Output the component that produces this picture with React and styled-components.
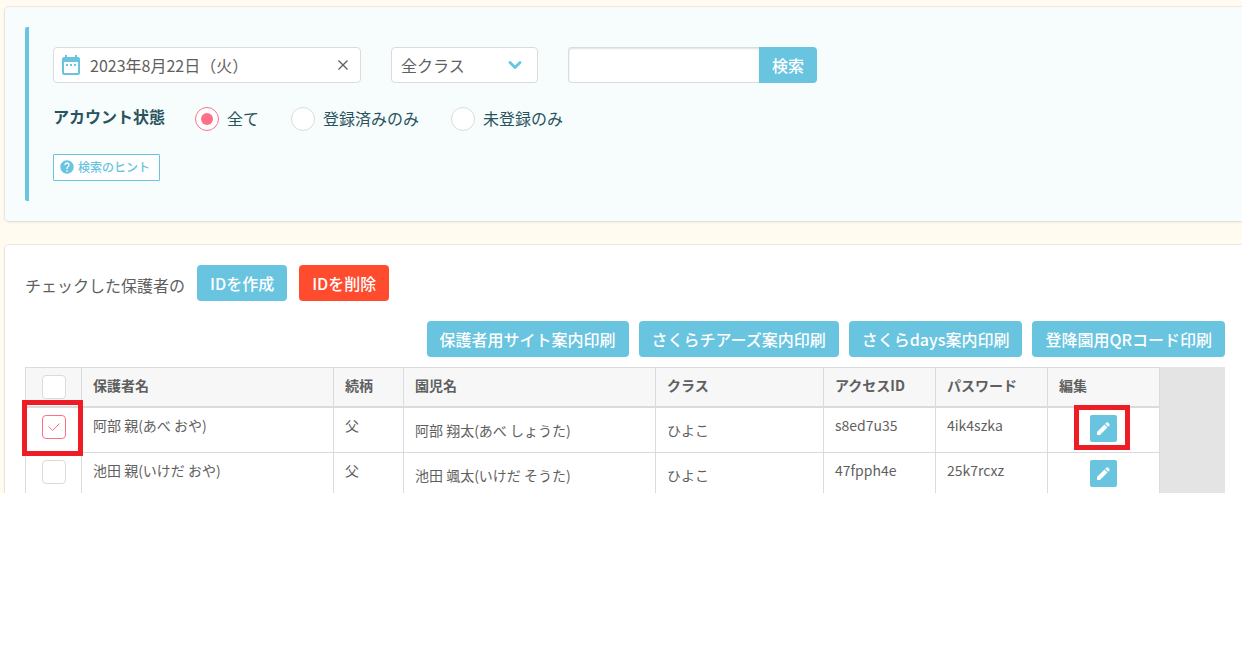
import React from "react";
import styled, { createGlobalStyle, css } from "styled-components";
import { MdDateRange, MdHelp } from "react-icons/md";

const colors = {
  blue: "#68c4df",
  red: "#ff4b2e",
  pink: "#ff7088",
  text: "#5f5f5f",
  teal: "#29535e",
  line: "#dbdbdb",
  mark: "#ee1c25",
};

const GlobalStyle = createGlobalStyle`
  *, *::before, *::after { box-sizing: border-box; }
  body {
    margin: 0;
    background: #fff;
    color: ${colors.text};
    font-family: "Noto Sans CJK JP", sans-serif;
    font-size: 16px;
    line-height: 24px;
  }
  button, input, select { font: inherit; color: inherit; margin: 0; }
`;

const Page = styled.main`
  display: flex;
  flex-direction: column;
  gap: 24px;
  padding: 7px 0 0 5px;
  background: #fffbf0;
`;

const Card = styled.section`
  padding: 20px 0 20px 20px;
  border-radius: 4px 0 0 4px;
  box-shadow: 0 0 1px 1px rgba(0, 0, 0, 0.07), 0 1px 3px rgba(0, 0, 0, 0.08);
`;

const SearchCard = styled(Card)`
  background: #f7fdfd;
`;

const ListCard = styled(Card)`
  padding: 20px 17px 0 20px;
  border-radius: 4px 0 0 0;
  background: #fff;
  clip-path: inset(-4px -4px 0 -4px);
`;

const SearchForm = styled.form`
  display: flex;
  flex-direction: column;
  align-items: flex-start;
  padding: 20px 24px;
  border-left: 4px solid ${colors.blue};
  border-radius: 2px 0 0 2px;
`;

const FieldRow = styled.div`
  display: flex;
  gap: 30px;
`;

const fieldBox = css`
  height: 36px;
  border: 1px solid ${colors.line};
  border-radius: 4px;
  background: #fff;
`;

const DateField = styled.div`
  ${fieldBox}
  display: flex;
  align-items: center;
  gap: 7px;
  width: 308px;
  padding: 0 10px 0 5px;
  color: ${colors.blue};
`;

const DateInput = styled.input`
  flex: 1;
  min-width: 0;
  padding: 0;
  border: 0;
  background: transparent;
  color: ${colors.text};
`;

const ClearButton = styled.button`
  display: flex;
  padding: 0;
  border: 0;
  background: transparent;
  color: ${colors.text};
`;

const SelectField = styled.div`
  display: grid;
  align-items: center;
  width: 147px;
  & > * { grid-area: 1 / 1; }
  & > svg { justify-self: end; margin-right: 16px; pointer-events: none; }
`;

const Select = styled.select`
  ${fieldBox}
  width: 100%;
  padding: 0 9px;
  appearance: none;
`;

const SearchGroup = styled.div`
  display: flex;
`;

const SearchInput = styled.input`
  ${fieldBox}
  width: 191px;
  padding: 0 10px;
  border-right: 0;
  border-radius: 4px 0 0 4px;
  box-shadow: inset 0 1px 2px rgba(0, 0, 0, 0.12);
`;

const Button = styled.button`
  height: 36px;
  padding: 0 13px;
  border: 0;
  border-radius: ${(p) => (p.$joined ? "0 4px 4px 0" : "4px")};
  background: ${(p) => (p.$danger ? colors.red : colors.blue)};
  color: #fff;
  font-weight: 500;
  white-space: nowrap;
`;

const StatusGroup = styled.fieldset`
  display: flex;
  gap: 32px;
  margin: 24px 0 23px;
  padding: 0;
  border: 0;
  color: ${colors.teal};
`;

const StatusLegend = styled.legend`
  float: left;
  margin-right: -2px;
  padding: 0;
  line-height: 18px;
  font-weight: 700;
`;

const RadioLabel = styled.label`
  display: flex;
  align-items: flex-start;
  gap: 8px;
  line-height: 22px;
`;

const Radio = styled.input`
  display: grid;
  place-items: center;
  width: 24px;
  height: 24px;
  appearance: none;
  border: 1px solid ${colors.line};
  border-radius: 50%;
  background: #fff;
  &:checked { border-color: ${colors.pink}; }
  &:checked::before {
    content: "";
    width: 12px;
    height: 12px;
    border-radius: 50%;
    background: ${colors.pink};
  }
`;

const HintButton = styled.button`
  display: flex;
  align-items: center;
  gap: 3px;
  height: 27px;
  padding: 0 9px 2px 5px;
  border: 1px solid ${colors.blue};
  border-radius: 1px;
  background: #fff;
  color: ${colors.blue};
  font-size: 12px;
  font-weight: 500;
`;

const ActionRow = styled.div`
  display: flex;
  align-items: center;
  gap: 12px;
`;

const ActionText = styled.span`
  padding-top: 4px;
`;

const PrintRow = styled.div`
  display: flex;
  justify-content: flex-end;
  gap: 10px;
  margin: 20px 0 10px;
`;

const Grid = styled.div`
  background: #e4e4e4;
`;

const Table = styled.table`
  width: 1135px;
  table-layout: fixed;
  border-collapse: separate;
  border-spacing: 0;
  background: #fff;
  font-size: 14px;
  line-height: 20px;
`;

const cellBase = css`
  vertical-align: top;
  text-align: left;
  border-right: 1px solid ${colors.line};
  &:first-child {
    padding: 7px 0 0 16px;
    border-left: 1px solid ${colors.line};
  }
`;

const HeadCell = styled.th`
  ${cellBase}
  height: 41px;
  padding: 7px 11px 0;
  border-top: 1px solid ${colors.line};
  border-bottom: 2px solid ${colors.line};
  background: #f7f7f7;
  font-weight: 700;
`;

const Cell = styled.td`
  ${cellBase}
  position: relative;
  height: 45px;
  padding: ${(p) => (p.$child ? 12 : 7)}px 11px 0;
  border-bottom: 1px solid ${colors.line};
  tr:last-child > & {
    height: 40px;
    border-bottom: 0;
  }
`;

const EditCell = styled(Cell)`
  padding: 7px 0 0;
`;

const Check = styled.input`
  display: grid;
  place-items: center;
  width: 24px;
  height: 24px;
  appearance: none;
  border: 1px solid ${colors.line};
  border-radius: 4px;
  background: #fff;
  &:checked { border-color: ${colors.pink}; }
`;

const CheckBox = styled.span`
  display: grid;
  width: 24px;
  & > * { grid-area: 1 / 1; }
  & > svg { place-self: center; pointer-events: none; display: none; }
  & > input:checked + svg { display: block; }
`;

const EditButton = styled.button`
  display: grid;
  place-items: center;
  width: 27px;
  height: 27px;
  margin: 0 auto;
  padding: 0;
  border: 0;
  border-radius: 2px;
  background: ${colors.blue};
  color: #fff;
`;

const Highlight = styled.span`
  position: absolute;
  z-index: 1;
  inset: ${(p) => p.$inset};
  border: 5px solid ${colors.mark};
  pointer-events: none;
`;

const columns = [
  { label: "保護者名", width: 252 },
  { label: "続柄", width: 70 },
  { label: "園児名", width: 252 },
  { label: "クラス", width: 168 },
  { label: "アクセスID", width: 112 },
  { label: "パスワード", width: 112 },
  { label: "編集", width: 112 },
];

const guardians = [
  { name: "阿部 親(あべ おや)", relation: "父", child: "阿部 翔太(あべ しょうた)", group: "ひよこ", id: "s8ed7u35", password: "4ik4szka", marked: true },
  { name: "池田 親(いけだ おや)", relation: "父", child: "池田 颯太(いけだ そうた)", group: "ひよこ", id: "47fpph4e", password: "25k7rcxz", marked: false },
];

const statuses = ["全て", "登録済みのみ", "未登録のみ"];

const printActions = [
  "保護者用サイト案内印刷",
  "さくらチアーズ案内印刷",
  "さくらdays案内印刷",
  "登降園用QRコード印刷",
];

function RowCheck(props) {
  return (
    <CheckBox>
      <Check type="checkbox" {...props} />
      <svg width="12" height="10" viewBox="0 0 12 10" fill="none" stroke={colors.pink}>
        <path d="M.5 4.5 4.5 8.5 11.5 1.5" />
      </svg>
    </CheckBox>
  );
}

function PencilIcon() {
  return (
    <svg width="13" height="13" viewBox="0 0 13 13" fill="currentColor">
      <path d="M0 12.6V10.2Q0 9.9.2 9.7L7.5 2.5 10.4 5.4 3.2 12.7Q3 12.9 2.7 12.9H.3Q0 12.9 0 12.6Z" />
      <path d="M8.2 1.8 9.2.8Q10.3-.1 11.3.8L12.2 1.7Q13 2.7 12.2 3.7L11.1 4.7Z" />
    </svg>
  );
}

export default function App() {
  return (
    <>
      <GlobalStyle />
      <Page>
        <SearchCard>
          <SearchForm onSubmit={(e) => e.preventDefault()}>
            <FieldRow>
              <DateField>
                <MdDateRange size={24} />
                <DateInput type="text" aria-label="日付" defaultValue="2023年8月22日（火）" />
                <ClearButton type="button" aria-label="クリア">
                  <svg width="14" height="14" viewBox="0 0 14 14" fill="none" stroke="currentColor" strokeWidth="1.3">
                    <path d="M2.5 2.5 11.5 11.5M11.5 2.5 2.5 11.5" />
                  </svg>
                </ClearButton>
              </DateField>
              <SelectField>
                <Select aria-label="クラス" defaultValue="all">
                  <option value="all">全クラス</option>
                </Select>
                <svg width="14" height="10" viewBox="0 0 14 10" fill="none" stroke={colors.blue} strokeWidth="2.8" strokeLinecap="round" strokeLinejoin="round">
                  <path d="M2 2.5 7 7.5 12 2.5" />
                </svg>
              </SelectField>
              <SearchGroup>
                <SearchInput type="text" aria-label="検索キーワード" />
                <Button type="submit" $joined>検索</Button>
              </SearchGroup>
            </FieldRow>
            <StatusGroup>
              <StatusLegend>アカウント状態</StatusLegend>
              {statuses.map((status, i) => (
                <RadioLabel key={status}>
                  <Radio type="radio" name="status" defaultChecked={i === 0} />
                  {status}
                </RadioLabel>
              ))}
            </StatusGroup>
            <HintButton type="button">
              <MdHelp size={16} />
              検索のヒント
            </HintButton>
          </SearchForm>
        </SearchCard>
        <ListCard>
          <ActionRow>
            <ActionText>チェックした保護者の</ActionText>
            <Button type="button">IDを作成</Button>
            <Button type="button" $danger>IDを削除</Button>
          </ActionRow>
          <PrintRow>
            {printActions.map((label) => (
              <Button type="button" key={label}>{label}</Button>
            ))}
          </PrintRow>
          <Grid>
            <Table>
              <colgroup>
                <col width={57} />
                {columns.map((c) => (
                  <col key={c.label} width={c.width} />
                ))}
              </colgroup>
              <thead>
                <tr>
                  <HeadCell><RowCheck aria-label="すべて選択" /></HeadCell>
                  {columns.map((c) => (
                    <HeadCell key={c.label} scope="col">{c.label}</HeadCell>
                  ))}
                </tr>
              </thead>
              <tbody>
                {guardians.map((g) => (
                  <tr key={g.id}>
                    <Cell>
                      <RowCheck aria-label={g.name} defaultChecked={g.marked} />
                      {g.marked && <Highlight $inset="-8px -2px -4px -4px" />}
                    </Cell>
                    <Cell>{g.name}</Cell>
                    <Cell>{g.relation}</Cell>
                    <Cell $child>{g.child}</Cell>
                    <Cell $child>{g.group}</Cell>
                    <Cell>{g.id}</Cell>
                    <Cell>{g.password}</Cell>
                    <EditCell>
                      <EditButton type="button" aria-label="編集">
                        <PencilIcon />
                      </EditButton>
                      {g.marked && <Highlight $inset="-3px 29px 2px 26px" />}
                    </EditCell>
                  </tr>
                ))}
              </tbody>
            </Table>
          </Grid>
        </ListCard>
      </Page>
    </>
  );
}
